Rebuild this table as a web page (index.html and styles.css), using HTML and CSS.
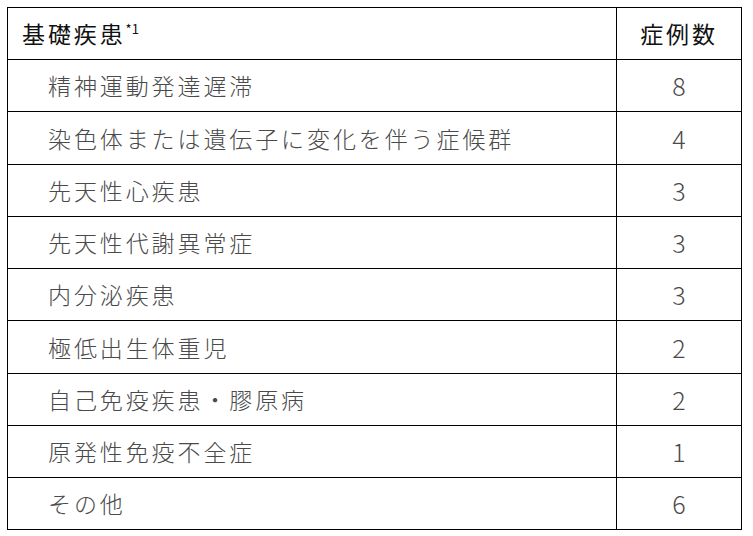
FILE: index.html
```html
<!DOCTYPE html>
<html lang="ja">
<head>
<meta charset="utf-8">
<link rel="stylesheet" href="styles.css">
</head>
<body>
<table class="cases">
  <thead>
    <tr class="head-row">
      <th class="name-col">基礎疾患<sup class="note">*1</sup></th>
      <th class="num-col">症例数</th>
    </tr>
  </thead>
  <tbody>
    <tr><td class="name">精神運動発達遅滞</td><td class="num">8</td></tr>
    <tr class="tall"><td class="name">染色体または遺伝子に変化を伴う症候群</td><td class="num">4</td></tr>
    <tr><td class="name">先天性心疾患</td><td class="num">3</td></tr>
    <tr><td class="name">先天性代謝異常症</td><td class="num">3</td></tr>
    <tr><td class="name">内分泌疾患</td><td class="num">3</td></tr>
    <tr class="tall"><td class="name">極低出生体重児</td><td class="num">2</td></tr>
    <tr><td class="name">自己免疫疾患・膠原病</td><td class="num">2</td></tr>
    <tr><td class="name">原発性免疫不全症</td><td class="num">1</td></tr>
    <tr><td class="name">その他</td><td class="num">6</td></tr>
  </tbody>
</table>
</body>
</html>
```
FILE: styles.css
```css
html, body {
  background: #ffffff;
}
body {
  margin: 7px 0 0 7px;
  font-family: "Noto Sans CJK JP", "Noto Sans", sans-serif;
}
.cases {
  border-collapse: collapse;
  width: 735px;
  table-layout: fixed;
}
.cases th,
.cases td {
  border: 1px solid #000;
  padding: 0;
  height: 51px;
  vertical-align: middle;
  font-size: 23px;
  letter-spacing: 2.9px;
  line-height: 1;
}
.cases .tall td {
  height: 52px;
}
.name-col {
  width: 594px;
  text-align: left;
  font-weight: 400;
  color: #111;
  padding-left: 14px !important;
}
.num-col {
  text-align: center;
  font-weight: 400;
  color: #111;
}
.note {
  font-size: 13px;
  letter-spacing: 0;
  vertical-align: 9px;
  line-height: 0;
}
.name,
.num {
  font-family: "Noto Sans CJK JP Light", "Noto Sans CJK JP DemiLight", "Noto Sans CJK JP", sans-serif;
  font-weight: 300;
  color: #4a4a4a;
}
.name {
  padding-left: 40px !important;
}
.num {
  text-align: center;
  font-size: 25px !important;
  letter-spacing: 0 !important;
}
```
